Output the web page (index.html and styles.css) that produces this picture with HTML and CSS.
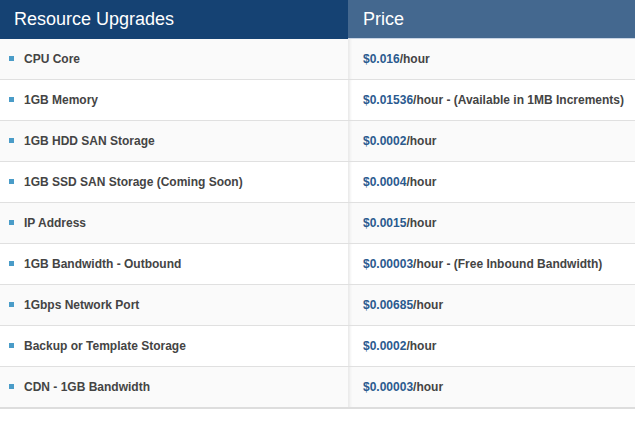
FILE: index.html
```html
<!DOCTYPE html>
<html>
<head>
<meta charset="utf-8">
<link rel="stylesheet" href="styles.css">
</head>
<body>
<table class="pricing">
  <thead>
    <tr>
      <th class="col-name">Resource Upgrades</th>
      <th class="col-price">Price</th>
    </tr>
  </thead>
  <tbody>
    <tr><td class="name"><span class="bullet"></span>CPU Core</td><td class="price"><span class="amt">$0.016</span>/hour</td></tr>
    <tr><td class="name"><span class="bullet"></span>1GB Memory</td><td class="price"><span class="amt">$0.01536</span>/hour - (Available in 1MB Increments)</td></tr>
    <tr><td class="name"><span class="bullet"></span>1GB HDD SAN Storage</td><td class="price"><span class="amt">$0.0002</span>/hour</td></tr>
    <tr><td class="name"><span class="bullet"></span>1GB SSD SAN Storage (Coming Soon)</td><td class="price"><span class="amt">$0.0004</span>/hour</td></tr>
    <tr><td class="name"><span class="bullet"></span>IP Address</td><td class="price"><span class="amt">$0.0015</span>/hour</td></tr>
    <tr><td class="name"><span class="bullet"></span>1GB Bandwidth - Outbound</td><td class="price"><span class="amt">$0.00003</span>/hour - (Free Inbound Bandwidth)</td></tr>
    <tr><td class="name"><span class="bullet"></span>1Gbps Network Port</td><td class="price"><span class="amt">$0.00685</span>/hour</td></tr>
    <tr><td class="name"><span class="bullet"></span>Backup or Template Storage</td><td class="price"><span class="amt">$0.0002</span>/hour</td></tr>
    <tr><td class="name"><span class="bullet"></span>CDN - 1GB Bandwidth</td><td class="price"><span class="amt">$0.00003</span>/hour</td></tr>
  </tbody>
</table>
</body>
</html>
```
FILE: styles.css
```css
html, body {
  margin: 0;
  padding: 0;
  background: #ffffff;
}
body {
  font-family: "Liberation Sans", Arial, sans-serif;
}
.pricing {
  width: 635px;
  border-collapse: collapse;
  border-spacing: 0;
  border-bottom: 2px solid #dddddd;
}
.pricing th {
  height: 38px;
  padding: 0;
  text-align: left;
  font-weight: normal;
  font-size: 18px;
  color: #ffffff;
  vertical-align: middle;
}
.col-name {
  width: 348px;
  background: #154273;
  padding-left: 14px !important;
  box-sizing: border-box;
}
.col-price {
  background: #44688f;
  padding-left: 15px !important;
  border-bottom: 1px solid #c8d4e4;
}
.pricing td {
  height: 40px;
  padding: 0;
  font-size: 12px;
  font-weight: bold;
  color: #444444;
  vertical-align: middle;
  border-bottom: 1px solid #e0e0e0;
}
.pricing tbody tr:nth-child(odd) td {
  background: #fafafa;
}
.pricing tbody tr:nth-child(even) td {
  background: #ffffff;
}
.pricing tbody tr:last-child td {
  border-bottom: none;
}
.name {
  padding-left: 9px !important;
}
.bullet {
  display: inline-block;
  width: 5px;
  height: 5px;
  background: #4a9cc8;
  margin-right: 10px;
  vertical-align: 2px;
}
.price {
  padding-left: 15px !important;
  box-shadow: inset 4px 0 3px -2px #e8e8e8;
}
.amt {
  color: #2b5a8f;
}
```
